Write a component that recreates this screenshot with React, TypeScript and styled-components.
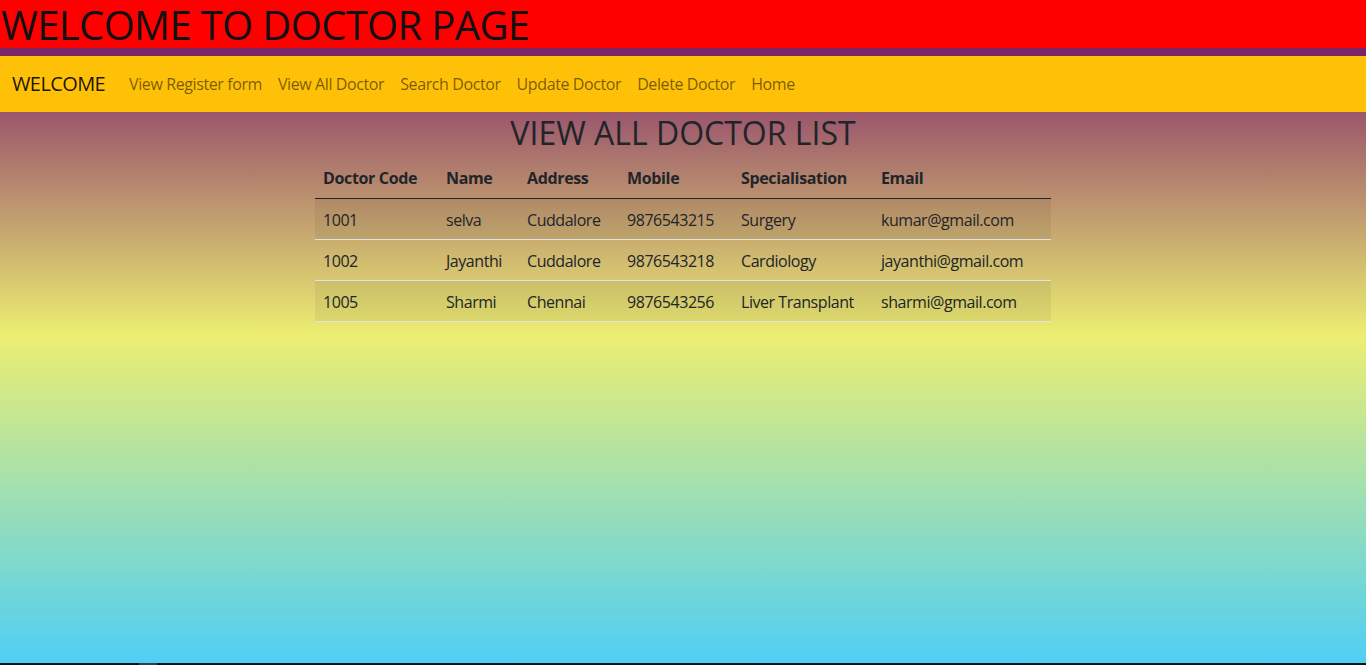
import React from "react";
import styled, { createGlobalStyle } from "styled-components";

const FONT = `"Segoe UI", "Open Sans", "Noto Sans", sans-serif`;

const Global = createGlobalStyle`
  html, body { margin: 0; padding: 0; }
  body { font-family: ${FONT}; color: #212529; font-size: 16px; line-height: 1.5; }
  * { box-sizing: border-box; }
`;

const Page = styled.div`
  display: flex;
  flex-direction: column;
  height: 665px;
  overflow: hidden;
`;

const Banner = styled.h1`
  margin: 0;
  background: #ff0000;
  color: #111;
  font-size: 40px;
  font-weight: 500;
  line-height: 46px;
  padding: 2px 0 0 1px;
  letter-spacing: -0.65px;
`;

const Strip = styled.div`
  height: 8px;
  background: #7b2568;
`;

const Navbar = styled.nav`
  display: flex;
  align-items: center;
  height: 56px;
  padding: 8px 12px;
  background: #ffc107;
`;

const Brand = styled.span`
  font-size: 20px;
  line-height: 30px;
  padding: 5px 0;
  margin-right: 16px;
  letter-spacing: -0.6px;
  color: rgba(0, 0, 0, 0.9);
`;

const NavList = styled.ul`
  display: flex;
  margin: 0;
  padding: 0;
  list-style: none;
`;

const NavLink = styled.li`
  padding: 8px;
  color: rgba(0, 0, 0, 0.55);
  font-size: 16px;
  line-height: 24px;
  letter-spacing: -0.4px;
`;

const Content = styled.main`
  flex: 1;
  background: linear-gradient(
    to bottom,
    #9b566c 0%,
    #ecee72 40.5%,
    #4fcff5 100%
  );
  display: flex;
  flex-direction: column;
  align-items: center;
`;

const Title = styled.h2`
  margin: 0 0 7px;
  padding-top: 2px;
  font-size: 32px;
  font-weight: 500;
  line-height: 37px;
  color: #212529;
`;

const Table = styled.table`
  border-collapse: collapse;
  color: #212529;
  table-layout: fixed;
  width: 736px;
`;

const HeadCell = styled.th<{ $w: number }>`
  width: ${(p) => p.$w}px;
  text-align: left;
  font-weight: 700;
  padding: 8px;
  line-height: 24px;
  letter-spacing: -0.35px;
  border-bottom: 1px solid #212529;
  white-space: nowrap;
`;

const Row = styled.tr<{ $striped: boolean }>`
  background: ${(p) => (p.$striped ? "rgba(0,0,0,0.05)" : "transparent")};
  border-bottom: 1px solid #dee2e6;
`;

const Cell = styled.td`
  padding: 8.5px 8px 7.5px;
  line-height: 24px;
  letter-spacing: -0.45px;
  white-space: nowrap;
`;

const Footer = styled.div`
  height: 2px;
  background: #111;
  display: flex;
`;

const Thumb = styled.div`
  margin-left: 139px;
  width: 18px;
  background: #3a3d40;
`;

const columns = [
  { label: "Doctor Code", w: 123 },
  { label: "Name", w: 81 },
  { label: "Address", w: 100 },
  { label: "Mobile", w: 114 },
  { label: "Specialisation", w: 140 },
  { label: "Email", w: 178 },
];

const doctors = [
  ["1001", "selva", "Cuddalore", "9876543215", "Surgery", "kumar@gmail.com"],
  ["1002", "Jayanthi", "Cuddalore", "9876543218", "Cardiology", "jayanthi@gmail.com"],
  ["1005", "Sharmi", "Chennai", "9876543256", "Liver Transplant", "sharmi@gmail.com"],
];

const links = [
  "View Register form",
  "View All Doctor",
  "Search Doctor",
  "Update Doctor",
  "Delete Doctor",
  "Home",
];

export default function App() {
  return (
    <>
      <Global />
      <Page>
        <Banner>WELCOME TO DOCTOR PAGE</Banner>
        <Strip />
        <Navbar>
          <Brand>WELCOME</Brand>
          <NavList>
            {links.map((l) => (
              <NavLink key={l}>{l}</NavLink>
            ))}
          </NavList>
        </Navbar>
        <Content>
          <Title>VIEW ALL DOCTOR LIST</Title>
          <Table>
            <thead>
              <tr>
                {columns.map((c) => (
                  <HeadCell key={c.label} $w={c.w}>
                    {c.label}
                  </HeadCell>
                ))}
              </tr>
            </thead>
            <tbody>
              {doctors.map((d, i) => (
                <Row key={d[0]} $striped={i % 2 === 0}>
                  {d.map((v, j) => (
                    <Cell key={j}>{v}</Cell>
                  ))}
                </Row>
              ))}
            </tbody>
          </Table>
        </Content>
        <Footer>
          <Thumb />
        </Footer>
      </Page>
    </>
  );
}
